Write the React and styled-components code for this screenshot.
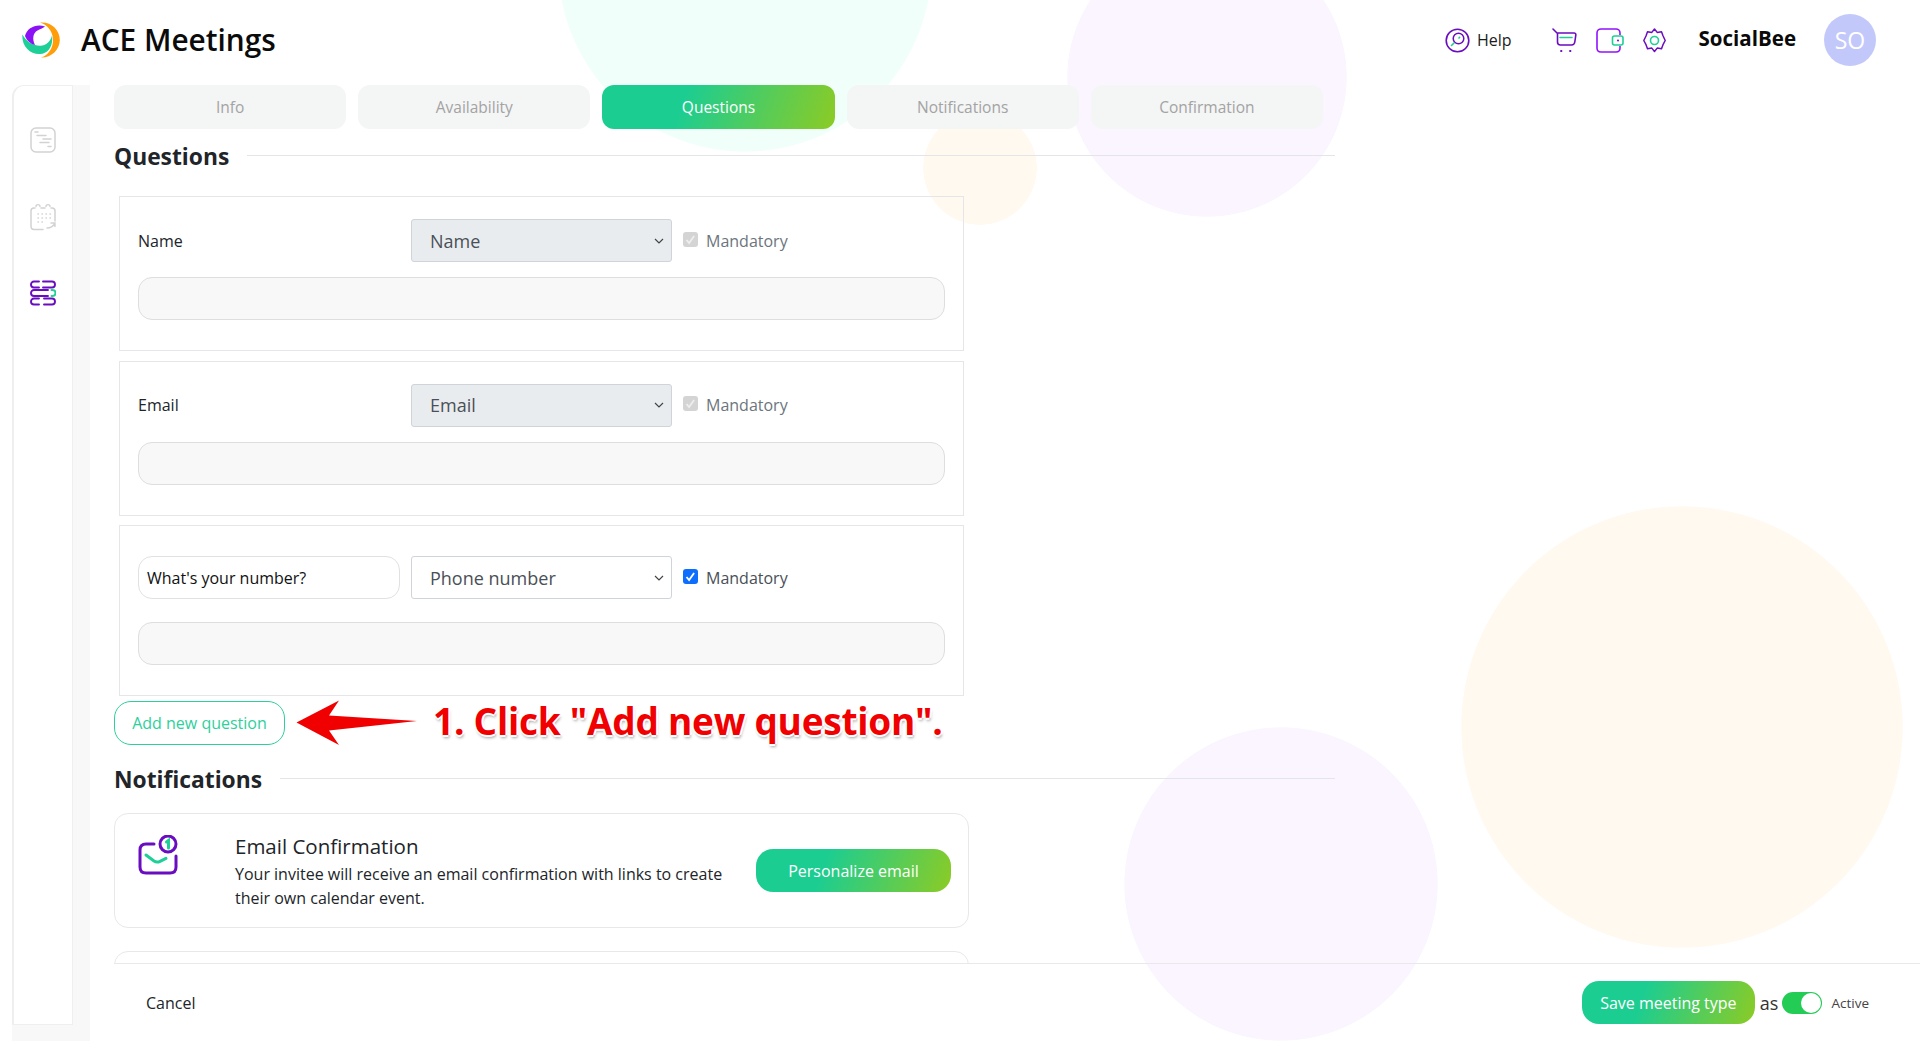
import React from "react";
import styled, { createGlobalStyle } from "styled-components";

const GlobalStyle = createGlobalStyle`
  * { box-sizing: border-box; }
  html, body { margin: 0; padding: 0; background: #fff; }
  body { font-family: "Open Sans", "Noto Sans", sans-serif; color: #212529; }
`;

const GREEN_GRADIENT = "linear-gradient(110deg, #1ccd91 35%, #8ccb24 100%)";
const CHEVRON = `url("data:image/svg+xml,%3Csvg xmlns='http://www.w3.org/2000/svg' width='10' height='6'%3E%3Cpath d='M1 1l4 4 4-4' fill='none' stroke='%23444' stroke-width='1.2'/%3E%3C/svg%3E")`;
const TICK = (color) => `url("data:image/svg+xml,%3Csvg xmlns='http://www.w3.org/2000/svg' width='15' height='15'%3E%3Cpath d='M3.5 8l2.6 3 5-7' fill='none' stroke='%23${color}' stroke-width='1.8'/%3E%3C/svg%3E")`;

const tabs = ["Info", "Availability", "Questions", "Notifications", "Confirmation"];

const Logo = () => (
  <svg width="38" height="36" viewBox="0 0 38 36">
    <path d="M18 .5C29-.5 37.8 7.5 37.8 18 37.8 28 29 36 19 35.6 27 33 31.5 25 31 17 30.5 9 25 2.5 18 .5Z" fill="#ff9d0a" />
    <path d="M.4 12.5C-.5 24 8 32.5 18 32 26 31.5 31.5 24 30 13.5 28.5 19.5 24 24 18 23.8 10 23.5 4 19 .4 12.5Z" fill="#1ecf97" />
    <path d="M23 4.5C14 1.5 5 6 3 14 5 19 9 22 13 23 10 17 11 11 15.500 8.500 18 7 20.500 6.500 23 4.500Z" fill="#8a12f5" />
  </svg>
);

const HelpIcon = () => (
  <svg width="25" height="25" viewBox="0 0 25 25" fill="none" strokeLinecap="round">
    <circle cx="12.500" cy="12.500" r="11.300" stroke="#6a0dc0" strokeWidth="1.600" />
    <circle cx="13.500" cy="10.500" r="5.300" stroke="#6a0dc0" strokeWidth="1.500" />
    <path d="M14 10l.6-.6M9 15l-2.500 2.500" stroke="#1ecf97" strokeWidth="1.600" />
  </svg>
);

const CartIcon = () => (
  <svg width="25" height="25" viewBox="0 0 25 25" fill="none" strokeLinecap="round" strokeLinejoin="round">
    <path d="M1 1l4 4h17c1.500 0 2 1 1.800 2.200l-1 6.800c-.3 2-1.500 3-3.300 3H8.500c-1.800 0-3-1.200-3-3V5" stroke="#6a0dc0" strokeWidth="1.600" />
    <path d="M8 9.500h12" stroke="#1ecf97" strokeWidth="1.600" />
    <path d="M9 23h.5M18 23h.5" stroke="#6a0dc0" strokeWidth="1.800" />
  </svg>
);

const WalletIcon = () => (
  <svg width="28" height="25" viewBox="0 0 28 25" fill="none">
    <path d="M24 7V5c0-2.300-1.700-4-4-4H5C2.700 1 1 2.700 1 5v15c0 2.300 1.700 4 4 4h15c2.300 0 4-1.700 4-4v-2" stroke="#9013fe" strokeWidth="1.600" />
    <rect x="16.500" y="8" width="10.500" height="9" rx="2" stroke="#1ecf97" strokeWidth="1.600" />
    <circle cx="22" cy="12.500" r="1" fill="#6a0dc0" />
  </svg>
);

const GearIcon = () => (
  <svg width="23" height="25" viewBox="0 0 23 25" fill="none">
    <path d="M11.500 1l2.700 3.400 4.300-.7 1.500 4.100L22.200 12.500 20 16.700l-1.500 4.100-4.300-.7-2.700 3.400-2.700-3.400-4.300.7L3 16.700.8 12.500 3 8l1.500-4.300 4.300.7Z" stroke="#6a0dc0" strokeWidth="1.500" strokeLinejoin="round" />
    <circle cx="11.500" cy="12.500" r="4" stroke="#1ecf97" strokeWidth="1.600" />
  </svg>
);

const FormIcon = () => (
  <svg width="26" height="26" viewBox="0 0 26 26" fill="none" stroke="#d2d2d2" strokeLinecap="round">
    <rect x="1" y="1" width="24" height="24" rx="5" strokeWidth="1.500" />
    <path d="M5 5h3M7 8.500h9M13 12h8M10 15.500h9M18 19.500h3" strokeWidth="1.500" />
  </svg>
);

const CalendarIcon = () => (
  <svg width="26" height="28" viewBox="0 0 26 28" fill="none" stroke="#d2d2d2" strokeLinecap="round">
    <path d="M5 5H4C2.300 5 1 6.300 1 8v15c0 2 1.300 3.500 3 3.500h9M11 5h4M21 5h1c1.700 0 3 1.300 3 3v10" strokeWidth="1.500" />
    <path d="M6 3.500C6 1 10 1 10 3.500M16 3.500C16 1 20 1 20 3.500M17 25c3 0 6-1.500 8-4.500M21 20h4v3.500" strokeWidth="1.400" />
    <path d="M8 11h.4M12 11h.4M16 11h.4M20 11h.4M8 15h.4M12 15h.4M16 15h.4M20 15h.4M8 19h.4M12 19h.4" strokeWidth="1.500" />
  </svg>
);

const QuestionsIcon = () => (
  <svg width="26" height="26" viewBox="0 0 26 26" fill="none" stroke="#6a0dc0" strokeWidth="1.900" strokeLinecap="round">
    <path d="M9 1.500H4a3 3 0 0 0 0 6h5M13 1.500h9a3 3 0 0 1 0 6h-9" />
    <path d="M18 10H4a3 3 0 0 0 0 6h14" />
    <path d="M21.500 10H22.500a3 3 0 0 1 0 6H21.500" stroke="#1ecf97" />
    <path d="M9 18.500H4a3 3 0 0 0 0 6h5M14 18.500h8a3 3 0 0 1 0 6h-8" />
  </svg>
);

const MailIcon = () => (
  <svg width="40" height="40" viewBox="0 0 40 40" fill="none" strokeLinecap="round">
    <path d="M16 9H8c-4 0-6 2.500-6 6v17c0 4 2.500 6 6 6h24c4 0 6-2.500 6-6V21" stroke="#6a0dc0" strokeWidth="3" />
    <circle cx="30" cy="9" r="8" stroke="#6a0dc0" strokeWidth="3" />
    <path d="M28.500 7l2-1.500V13M8 20l8 6c2 1.300 4 1.300 6 .3l6-3" stroke="#1ecf97" strokeWidth="3" />
  </svg>
);

const Pointer = () => (
  <svg width="123" height="46" viewBox="0 0 123 46">
    <path d="M1.500 22.500 44 .5 34 15.500 122 21 34 30.500 44 45Z" fill="#f00000" />
  </svg>
);

const QuestionRow = ({ label, type, locked }) => (
  <Panel $locked={locked}>
    <FieldRow>
      {locked ? <RowLabel>{label}</RowLabel> : <QuestionInput defaultValue={label} />}
      <TypeSelect disabled={locked} $locked={locked} defaultValue={type}>
        <option>{type}</option>
      </TypeSelect>
      <MandatoryLabel $locked={locked}>
        <Check type="checkbox" defaultChecked disabled={locked} $locked={locked} />
        Mandatory
      </MandatoryLabel>
    </FieldRow>
    <AnswerInput disabled />
  </Panel>
);

const App = () => {
  return (
    <Page>
      <GlobalStyle />
      <Header>
        <Brand>
          <Logo />
          <Title>ACE Meetings</Title>
        </Brand>
        <HeaderRight>
          <HelpLink><HelpIcon />Help</HelpLink>
          <IconGroup>
            <CartIcon />
            <WalletIcon />
            <GearIcon />
          </IconGroup>
          <Account>SocialBee</Account>
          <Avatar>SO</Avatar>
        </HeaderRight>
      </Header>

      <Body>
        <Rail>
          <RailPanel>
            <FormIcon />
            <CalendarIcon />
            <QuestionsIcon />
          </RailPanel>
        </Rail>

        <Main>
          <Scroller>
            <TabBar>
              {tabs.map((tab) => (
                <Tab key={tab} $active={tab === "Questions"}>{tab}</Tab>
              ))}
            </TabBar>

            <SectionTitle>Questions</SectionTitle>
            <PanelStack>
              <QuestionRow label="Name" type="Name" locked />
              <QuestionRow label="Email" type="Email" locked />
              <QuestionRow label="What's your number?" type="Phone number" />
            </PanelStack>

            <AddRow>
              <AddButton>Add new question</AddButton>
              <Pointer />
              <Callout>1. Click "Add new question".</Callout>
            </AddRow>

            <NotificationsTitle>Notifications</NotificationsTitle>
            <NotifyCard>
              <MailSlot><MailIcon /></MailSlot>
              <NotifyText>
                <NotifyTitle>Email Confirmation</NotifyTitle>
                <NotifyDesc>Your invitee will receive an email confirmation with links to create their own calendar event.</NotifyDesc>
              </NotifyText>
              <PersonalizeButton>Personalize email</PersonalizeButton>
            </NotifyCard>
            <NotifyCard />
          </Scroller>

          <Footer>
            <CancelLink>Cancel</CancelLink>
            <FooterRight>
              <SaveButton>Save meeting type</SaveButton>
              <AsText>as</AsText>
              <Toggle />
              <ActiveText>Active</ActiveText>
            </FooterRight>
          </Footer>
        </Main>
      </Body>
    </Page>
  );
};

// the pale circles are just a backdrop, panels sit on top of them
const Page = styled.div`
  width: 1920px;
  height: 1041px;
  overflow: hidden;
  display: flex;
  flex-direction: column;
  background:
    radial-gradient(circle 57px at 980px 168px, #fff9ef 99%, transparent 100%),
    radial-gradient(circle 187px at 745px -35px, #f0fffa 99.5%, transparent 100%),
    radial-gradient(circle 140px at 1207px 77px, #faf5fe 99.5%, transparent 100%),
    radial-gradient(circle 221px at 1682px 727px, #fff9ef 99.7%, transparent 100%),
    radial-gradient(circle 157px at 1281px 884px, #faf5fe 99.5%, transparent 100%),
    #fff;
`;

const Header = styled.header`
  height: 85px;
  flex: none;
  display: flex;
  align-items: center;
  justify-content: space-between;
  padding: 0 44px 5px 22px;
`;

const Brand = styled.div`
  display: flex;
  align-items: center;
  gap: 21px;
`;

const Title = styled.h1`
  margin: 0 0 2px;
  font-size: 29.8px;
  font-weight: 600;
  color: #0b0b0b;
`;

const HeaderRight = styled.div`
  display: flex;
  align-items: center;
`;

const HelpLink = styled.div`
  display: flex;
  align-items: center;
  gap: 7px;
  font-size: 16px;
  color: #1c1c1c;
`;

const IconGroup = styled.div`
  display: flex;
  align-items: center;
  gap: 19px;
  margin-left: 40px;
`;

const Account = styled.div`
  margin-left: 33px;
  font-size: 20.5px;
  font-weight: 700;
  color: #0a0a0a;
  position: relative;
  top: -2px;
`;

const Avatar = styled.div`
  width: 52px;
  height: 52px;
  margin-left: 28px;
  border-radius: 50%;
  background: #c3c8fb;
  color: #fff;
  font-size: 23px;
  display: flex;
  align-items: center;
  justify-content: center;
`;

const Body = styled.div`
  flex: 1;
  min-height: 0;
  display: flex;
`;

const Rail = styled.aside`
  width: 78px;
  margin-left: 12px;
  flex: none;
  background: #f8f8f8;
  border-top-left-radius: 12px;
`;

const RailPanel = styled.div`
  width: 61px;
  height: 940px;
  background: #fff;
  border: 1px solid #efefef;
  border-width: 1px 1px 1px 2px;
  border-top-left-radius: 12px;
  display: flex;
  flex-direction: column;
  align-items: center;
  gap: 49.5px;
  padding: 41px 0 0;
`;

const Main = styled.main`
  flex: 1;
  min-width: 0;
  margin-left: 24px;
  display: flex;
  flex-direction: column;
`;

const Scroller = styled.div`
  flex: 1;
  min-height: 0;
  overflow: hidden;
  width: 1221px;
`;

const TabBar = styled.nav`
  display: flex;
  gap: 12px;
  width: 1209px;
`;

const Tab = styled.div`
  flex: 1;
  height: 44px;
  border-radius: 12px;
  display: flex;
  align-items: center;
  justify-content: center;
  font-size: 15.5px;
  color: ${({ $active }) => ($active ? "#fff" : "#a3a3a3")};
  background: ${({ $active }) => ($active ? GREEN_GRADIENT : "#f4f5f5")};
`;

const SectionTitle = styled.h2`
  margin: 11px 0 24px;
  height: 32px;
  display: flex;
  align-items: center;
  gap: 18px;
  font-size: 22.8px;
  font-weight: 700;
  color: #212529;

  &::after {
    content: "";
    flex: 1;
    height: 1px;
    margin-top: -1px;
    background: #e4e5e9;
  }
`;

const NotificationsTitle = styled(SectionTitle)`
  margin: 18px 0 18px;
`;

const PanelStack = styled.div`
  display: flex;
  flex-direction: column;
  gap: 9.5px;
  width: 845px;
  margin-left: 5px;
`;

const Panel = styled.section`
  display: flex;
  flex-direction: column;
  gap: ${({ $locked }) => ($locked ? "15px" : "23px")};
  padding: ${({ $locked }) => ($locked ? "22px 18px 30px" : "30px 18px 30px")};
  border: 1px solid #e5e6ea;
`;

const FieldRow = styled.div`
  display: flex;
  align-items: center;
  height: 43px;
`;

const RowLabel = styled.div`
  width: 273px;
  flex: none;
  font-size: 16px;
  color: #212529;
`;

const QuestionInput = styled.input`
  width: 262px;
  height: 43px;
  flex: none;
  margin-right: 11px;
  padding: 0 8px;
  border: 1px solid #e1e1e1;
  border-radius: 14px;
  background: #fff;
  font: 16px "Open Sans", sans-serif;
  color: #111;
`;

const TypeSelect = styled.select`
  width: 261px;
  height: 43px;
  flex: none;
  appearance: none;
  padding: 0 18px;
  border: 1px solid #ced4da;
  border-radius: 3px;
  font: 18px "Open Sans", sans-serif;
  opacity: 1;
  color: #495057;
  background: ${({ $locked }) => ($locked ? "#e9ecef" : "#fff")} ${CHEVRON} no-repeat right 7px center;
`;

const MandatoryLabel = styled.label`
  display: flex;
  align-items: center;
  gap: 8px;
  margin-left: 11px;
  font-size: 16px;
  color: ${({ $locked }) => ($locked ? "#6c757d" : "#495057")};
`;

const Check = styled.input`
  appearance: none;
  width: 15px;
  height: 15px;
  margin: -3px 0 0;
  border-radius: 3px;
  background: ${({ $locked }) => ($locked ? "#d4d4d4" : "#0d6efd")} ${({ $locked }) => TICK($locked ? "eeeeee" : "ffffff")} no-repeat center;
`;

const AnswerInput = styled.input`
  width: 100%;
  height: 43px;
  flex: none;
  border: 1px solid #dedede;
  border-radius: 14px;
  background: #f8f8f8;
`;

const AddRow = styled.div`
  display: flex;
  align-items: center;
  height: 44px;
  margin-top: 5px;
`;

const AddButton = styled.button`
  width: 171px;
  height: 44px;
  flex: none;
  margin-right: 10px;
  border: 1px solid #2ecf9c;
  border-radius: 17px;
  background: #fff;
  font: 16px "Open Sans", sans-serif;
  color: #2ecf9c;
`;

const Callout = styled.div`
  margin: -6px 0 0 15px;
  font-size: 37px;
  font-weight: 700;
  letter-spacing: -0.25px;
  white-space: nowrap;
  color: #f00000;
  text-shadow: 2px 0 0 #fff, -2px 0 0 #fff, 0 2px 0 #fff, 0 -2px 0 #fff, 1px 3px 3px rgba(0, 0, 0, 0.35);
`;

const NotifyCard = styled.article`
  width: 855px;
  height: 115px;
  margin-bottom: 23px;
  padding: 0 17px 0 23px;
  display: flex;
  align-items: center;
  background: #fff;
  border: 1px solid #e8e8e8;
  border-radius: 14px;
`;

const MailSlot = styled.div`
  width: 97px;
  flex: none;
  align-self: flex-start;
  padding-top: 21px;
`;

const NotifyText = styled.div`
  width: 500px;
  flex: none;
  padding-top: 2px;
`;

const NotifyTitle = styled.div`
  font-size: 20.5px;
  line-height: 27px;
  color: #212529;
`;

const NotifyDesc = styled.div`
  margin-top: 2px;
  font-size: 16px;
  line-height: 24px;
  color: #212529;
`;

const PersonalizeButton = styled.button`
  width: 195px;
  height: 43px;
  flex: none;
  margin-left: auto;
  border: 0;
  border-radius: 17px;
  background: ${GREEN_GRADIENT};
  font: 16px "Open Sans", sans-serif;
  color: #fff;
`;

const Footer = styled.footer`
  height: 78px;
  flex: none;
  display: flex;
  align-items: center;
  justify-content: space-between;
  padding: 0 51px 0 32px;
  border-top: 1px solid #e9e9e9;
`;

const CancelLink = styled.div`
  font-size: 16px;
  color: #212529;
`;

const FooterRight = styled.div`
  display: flex;
  align-items: center;
`;

const SaveButton = styled(PersonalizeButton)`
  width: 173px;
  border-radius: 17px;
`;

const AsText = styled.span`
  margin: 0 4px 0 5px;
  font-size: 18px;
  color: #333;
`;

const Toggle = styled.span`
  width: 40px;
  height: 22px;
  border-radius: 11px;
  background: #22cc55;
  position: relative;

  &::after {
    content: "";
    position: absolute;
    top: 1px;
    right: 1px;
    width: 20px;
    height: 20px;
    border-radius: 50%;
    background: #fff;
  }
`;

const ActiveText = styled.span`
  margin-left: 9px;
  font-size: 13.5px;
  color: #444;
`;

export default App;
